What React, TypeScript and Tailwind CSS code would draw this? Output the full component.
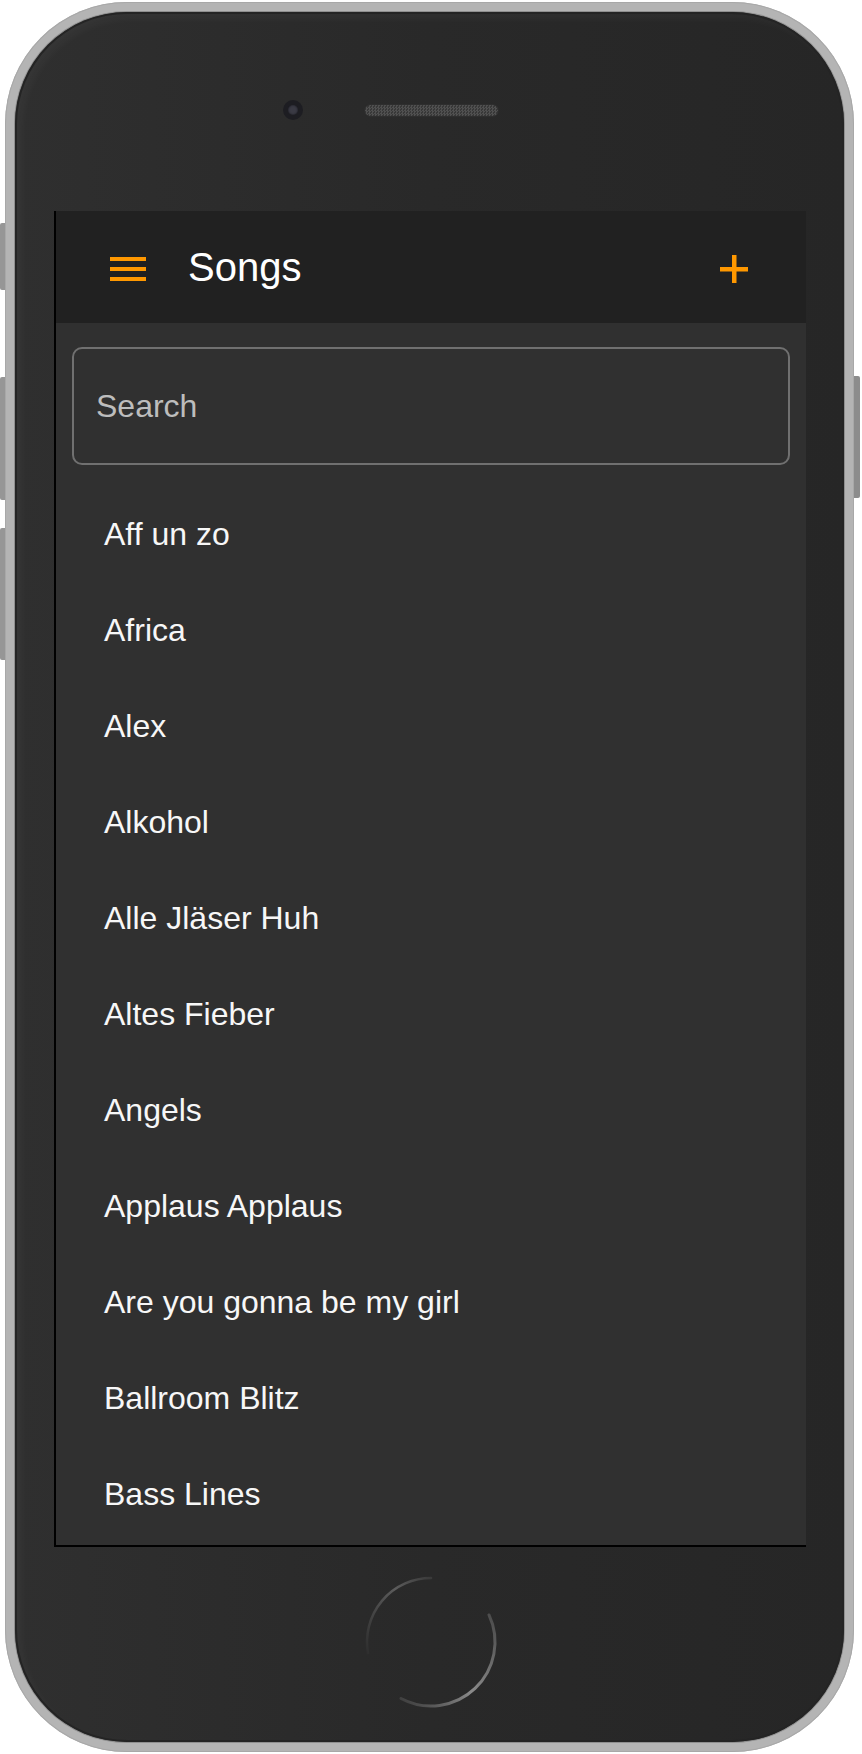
import React from 'react';

const songs = [
  'Aff un zo',
  'Africa',
  'Alex',
  'Alkohol',
  'Alle Jläser Huh',
  'Altes Fieber',
  'Angels',
  'Applaus Applaus',
  'Are you gonna be my girl',
  'Ballroom Blitz',
  'Bass Lines',
];

const MenuIcon = () => (
  <svg width="36" height="24" viewBox="0 0 36 24" className="mt-1 shrink-0">
    <rect x="0" y="0" width="36" height="4" fill="#ff9800" />
    <rect x="0" y="10" width="36" height="4" fill="#ff9800" />
    <rect x="0" y="20" width="36" height="4" fill="#ff9800" />
  </svg>
);

const PlusIcon = () => (
  <svg width="28" height="28" viewBox="0 0 28 28" className="mt-1 shrink-0">
    <rect x="12" y="0" width="4.5" height="28" fill="#ff9800" />
    <rect x="0" y="12" width="28" height="4.5" fill="#ff9800" />
  </svg>
);

const HomeButton = () => (
  <svg width="140" height="140" viewBox="0 0 140 140" className="ml-[3px]">
    <defs>
      <linearGradient id="arcTop" x1="1" y1="0" x2="0" y2="1">
        <stop offset="0" stopColor="#3a3a3a" />
        <stop offset="0.35" stopColor="#5c5c5c" />
        <stop offset="1" stopColor="#2e2e2e" />
      </linearGradient>
      <linearGradient id="arcBottom" x1="1" y1="0" x2="0" y2="1">
        <stop offset="0" stopColor="#4a4a4a" />
        <stop offset="0.55" stopColor="#8a8a8a" />
        <stop offset="1" stopColor="#3a3a3a" />
      </linearGradient>
    </defs>
    <path d="M70 6 A64 64 0 0 0 6.97 81.1" fill="none" stroke="url(#arcTop)" strokeWidth="2.5" strokeLinecap="round" />
    <path d="M128 42.95 A64 64 0 0 1 39.95 126.5" fill="none" stroke="url(#arcBottom)" strokeWidth="3" strokeLinecap="round" />
  </svg>
);

export default function App() {
  return (
    <div className="min-h-[1754px] w-[862px] bg-white pl-[5px] pt-[2px]" style={{ fontFamily: '"Liberation Sans", Arial, sans-serif' }}>
      <div className="relative h-[1750px] w-[849px]">
        {/* side buttons */}
        <div className="absolute left-[-5px] top-[221px] h-[67px] w-[6px] rounded-l-[2px] bg-[#969696]" />
        <div className="absolute left-[-5px] top-[375px] h-[123px] w-[6px] rounded-l-[2px] bg-[#969696]" />
        <div className="absolute left-[-5px] top-[526px] h-[132px] w-[6px] rounded-l-[2px] bg-[#969696]" />
        <div className="absolute right-[-6px] top-[374px] h-[122px] w-[7px] rounded-r-[2px] bg-[#8c8c8c]" />

        <div className="relative h-full w-full rounded-[122px] bg-[#b4b4b4] p-[10px] shadow-[inset_0_0_0_1px_#a8a8a8]">
          <div className="flex h-full flex-col rounded-[112px] bg-gradient-to-r from-[#2f2f2f] via-[#292929] to-[#262626] shadow-[0_0_0_1px_#8f8f8f,inset_0_0_0_2px_#242424,inset_6px_6px_10px_rgba(255,255,255,0.04)]">
            {/* top: camera + speaker */}
            <div className="flex h-[199px] shrink-0 items-start pl-[268px] pt-[88px]">
              <div className="flex items-center gap-[62px]">
                <div className="flex h-[20px] w-[20px] items-center justify-center rounded-full bg-[#1d1d22]">
                  <div className="h-[10px] w-[10px] rounded-full bg-[#3a3a44] shadow-[inset_0_0_2px_#15151a]" />
                </div>
                <div className="h-[11px] w-[133px] rounded-full bg-[repeating-conic-gradient(#505050_0%_25%,#383838_0%_50%)] bg-[length:3px_3px] shadow-[0_0_0_1px_#2e2e2e]" />
              </div>
            </div>

            {/* screen */}
            <div className="ml-[39px] flex h-[1336px] w-[752px] shrink-0 flex-col overflow-hidden border-b-2 border-l-2 border-black bg-[#303030]">
              <div className="flex h-[112px] shrink-0 items-center bg-[#212121] pl-[54px] pr-[58px]">
                <MenuIcon />
                <div className="ml-[42px] flex-1 text-[40px] text-white">Songs</div>
                <PlusIcon />
              </div>

              <div className="px-[16px] pb-[21px] pt-[24px]">
                <input
                  type="text"
                  placeholder="Search"
                  className="h-[118px] w-full rounded-[10px] border-2 border-[#707070] bg-transparent pl-[22px] text-[32px] text-white outline-none placeholder:text-[#bdbdbd]"
                />
              </div>

              <ul className="flex flex-col">
                {songs.map((song) => (
                  <li key={song} className="flex h-[96px] shrink-0 items-center pl-[48px] text-[32px] text-[#f7f7f7]">
                    {song}
                  </li>
                ))}
              </ul>
            </div>

            {/* home button */}
            <div className="flex flex-1 items-center justify-center pb-[6px]">
              <HomeButton />
            </div>
          </div>
        </div>
      </div>
    </div>
  );
}
